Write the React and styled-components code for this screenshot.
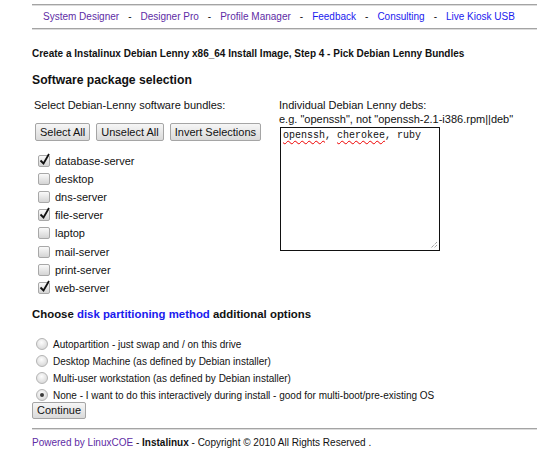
import React from 'react'
import styled, {createGlobalStyle} from 'styled-components'

const Global = createGlobalStyle`
  body {
    margin: 0;
    background: white;
    font-family: "Liberation Sans", Arial, sans-serif;
    color: #111;
  }
`

const Page = styled.div`
  margin-left: 32px;
  padding-top: 4px;
  font-size: 11px;
`

const Rule = styled.hr`
  border: 0;
  border-top: 1px solid #a4a4a4;
  border-bottom: 1px solid #dcdcdc;
  margin: ${p => p.$top || '0'} 0 0 0;
`

const Nav = styled.div`
  display: flex;
  white-space: nowrap;
  padding: 5px 0 5px 11px;
  font-size: 10px;
  line-height: 12px;
  & span.sep {
    margin: 0 9px;
    color: #111;
  }
`

const Link = styled.a`
  color: ${p => (p.$visited ? '#5e2ca5' : '#1a1aee')};
  text-decoration: none;
`

const Title = styled.h4`
  margin: 17px 0 0 0;
  font-size: 10px;
  line-height: 14px;
  font-weight: bold;
`

const Section = styled.h3`
  margin: ${p => p.$top || '11px'} 0 0 0;
  font-size: ${p => p.$size || '12.2px'};
  line-height: 16px;
  font-weight: bold;
  white-space: nowrap;
`

const Columns = styled.div`
  display: grid;
  grid-template-columns: 247px 1fr;
  margin-top: 10px;
`

const Caption = styled.div`
  padding-left: 2px;
  font-size: 11px;
  line-height: 14px;
`

const ButtonRow = styled.div`
  display: flex;
  gap: 6px;
  margin: 11px 0 0 3px;
`

const Button = styled.button`
  font-family: "Liberation Sans", Arial, sans-serif;
  font-size: 11px;
  color: #111;
  height: 18px;
  padding: 0 4px;
  background: linear-gradient(#f6f6f6, #dadada);
  border: 1px solid #a5a5a5;
  border-radius: 2px;
  line-height: 15px;
`

const CheckList = styled.div`
  margin: 11px 0 0 6px;
  display: flex;
  flex-direction: column;
`

const CheckRow = styled.label`
  display: flex;
  align-items: center;
  gap: 5px;
  height: 18.1px;
  font-size: 11px;
`

const Box = styled.span`
  position: relative;
  width: 10px;
  height: 10px;
  border: 1px solid #a8a8a8;
  border-radius: 2px;
  background: linear-gradient(#fafafa, #d4d4d4);
  flex: 0 0 auto;
  & svg {
    position: absolute;
    left: 0;
    top: -3px;
  }
`

const Note = styled.div`
  font-size: 11px;
  line-height: 14px;
`

const TextBox = styled.div`
  position: relative;
  box-sizing: border-box;
  width: 160px;
  height: 124px;
  margin: 1px 0 0 1px;
  border: 1px solid #111;
  padding: 1px 2px;
  font-family: "Liberation Mono", "DejaVu Sans Mono", monospace;
  font-size: 10px;
  line-height: 13px;
  & .bad {
    text-decoration: underline wavy #e00;
    text-decoration-thickness: 1px;
    text-underline-offset: 2px;
  }
  & svg {
    position: absolute;
    right: 1px;
    bottom: 1px;
  }
`

const BlueLink = styled.a`
  color: #1a1aee;
  text-decoration: none;
`

const RadioList = styled.div`
  margin: 14px 0 0 4px;
  display: flex;
  flex-direction: column;
`

const RadioRow = styled.label`
  display: flex;
  align-items: center;
  gap: 5px;
  height: 17px;
  font-size: 10px;
  white-space: nowrap;
`

const Dot = styled.span`
  width: 10px;
  height: 10px;
  border-radius: 50%;
  border: 1px solid #b4b4b4;
  background: radial-gradient(circle at 45% 35%, #fdfdfd, #cfcfcf);
  display: flex;
  align-items: center;
  justify-content: center;
  flex: 0 0 auto;
  &::after {
    content: '';
    width: 4px;
    height: 4px;
    border-radius: 50%;
    background: ${p => (p.$on ? '#3a3a3a' : 'transparent')};
  }
`

const ContinueButton = styled(Button)`
  margin-top: -3px;
  height: 17px;
`

const Footer = styled.div`
  padding: 6px 0 0 0;
  font-size: 10px;
  line-height: 14px;
  white-space: nowrap;
`

const Check = () => (
  <svg width="12" height="13" viewBox="0 0 12 13">
    <path d="M1.5 7.5 L4.5 10.5 L10 1" fill="none" stroke="#111" strokeWidth="1.8" />
  </svg>
)

const bundles = [
  ['database-server', true],
  ['desktop', false],
  ['dns-server', false],
  ['file-server', true],
  ['laptop', false],
  ['mail-server', false],
  ['print-server', false],
  ['web-server', true],
]

const options = [
  ['Autopartition - just swap and / on this drive', false],
  ['Desktop Machine (as defined by Debian installer)', false],
  ['Multi-user workstation (as defined by Debian installer)', false],
  ['None - I want to do this interactively during install - good for multi-boot/pre-existing OS', true],
]

const navLinks = [
  ['System Designer', true],
  ['Designer Pro', true],
  ['Profile Manager', true],
  ['Feedback', false],
  ['Consulting', false],
  ['Live Kiosk USB', false],
]

export default function App() {
  return (
    <Page>
      <Global />
      <Rule />
      <Nav>
        {navLinks.map(([name, visited], i) => (
          <React.Fragment key={name}>
            {i > 0 && <span className="sep">-</span>}
            <Link href="#" $visited={visited}>{name}</Link>
          </React.Fragment>
        ))}
      </Nav>
      <Rule />
      <Title>Create a Instalinux Debian Lenny x86_64 Install Image, Step 4 - Pick Debian Lenny Bundles</Title>
      <Section>Software package selection</Section>
      <Columns>
        <div>
          <Caption>Select Debian-Lenny software bundles:</Caption>
          <ButtonRow>
            <Button>Select All</Button>
            <Button>Unselect All</Button>
            <Button>Invert Selections</Button>
          </ButtonRow>
          <CheckList>
            {bundles.map(([name, on]) => (
              <CheckRow key={name}>
                <Box>{on && <Check />}</Box>
                {name}
              </CheckRow>
            ))}
          </CheckList>
        </div>
        <div>
          <Note>Individual Debian Lenny debs:</Note>
          <Note>e.g. "openssh", not "openssh-2.1-i386.rpm||deb"</Note>
          <TextBox>
            <span className="bad">openssh</span>, <span className="bad">cherokee</span>, ruby
            <svg width="8" height="8" viewBox="0 0 8 8">
              <path d="M7 1 L1 7 M7 4 L4 7" stroke="#777" strokeWidth="1" strokeDasharray="1 1" />
            </svg>
          </TextBox>
        </div>
      </Columns>
      <Section $top="9px" $size="11.4px">
        Choose <BlueLink href="#">disk partitioning method</BlueLink> additional options
      </Section>
      <RadioList>
        {options.map(([label, on]) => (
          <RadioRow key={label}>
            <Dot $on={on} />
            {label}
          </RadioRow>
        ))}
      </RadioList>
      <ContinueButton>Continue</ContinueButton>
      <Rule $top="9px" />
      <Footer>
        <Link href="#" $visited>Powered by LinuxCOE</Link> - <b>Instalinux</b> - Copyright © 2010 All Rights Reserved .
      </Footer>
    </Page>
  )
}
